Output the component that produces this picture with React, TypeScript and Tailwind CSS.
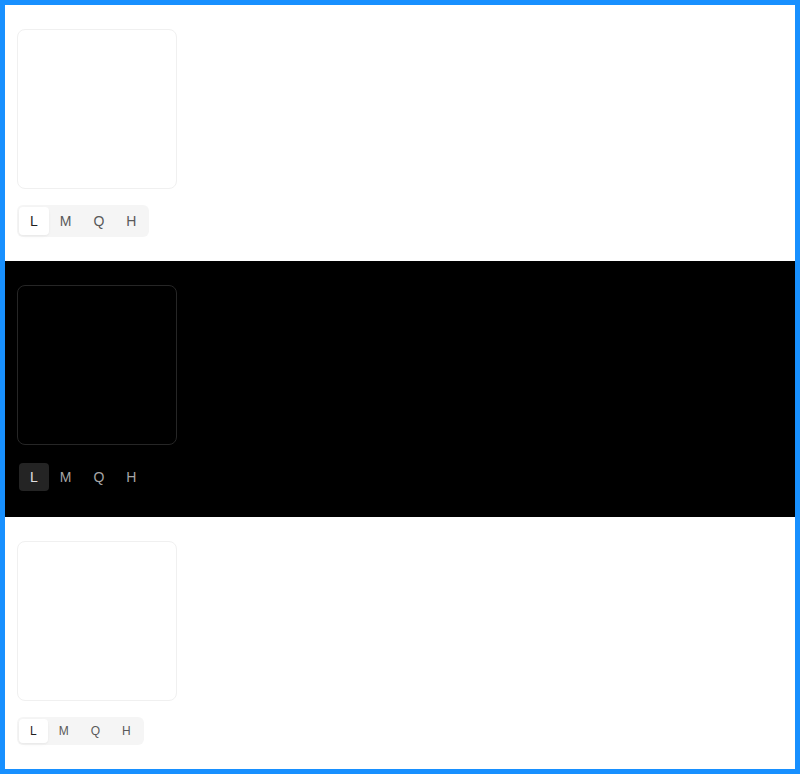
import { useState } from 'react';

const levels = ['L', 'M', 'Q', 'H'];

type Theme = 'light' | 'dark';

function Segmented({ theme, small }: { theme: Theme; small?: boolean }) {
  const [value, setValue] = useState('L');
  const dark = theme === 'dark';

  return (
    <div
      className={`inline-flex self-start p-[2px] rounded-md ${
        dark ? 'bg-black' : 'bg-[#f5f5f5]'
      }`}
    >
      {levels.map((level) => {
        const active = level === value;
        return (
          <button
            key={level}
            onClick={() => setValue(level)}
            className={`px-[11px] rounded ${small ? 'h-6 text-xs' : 'h-7 text-sm'} ${
              active
                ? dark
                  ? 'bg-[#242424] text-[#e0e0e0]'
                  : 'bg-white text-[#1f1f1f] shadow-[0_1px_2px_0_rgba(0,0,0,0.03),0_1px_6px_-1px_rgba(0,0,0,0.02),0_2px_4px_0_rgba(0,0,0,0.02)]'
                : dark
                  ? 'text-[#a6a6a6]'
                  : 'text-[#595959]'
            }`}
          >
            {level}
          </button>
        );
      })}
    </div>
  );
}

function QRBlock({ theme, small }: { theme: Theme; small?: boolean }) {
  const dark = theme === 'dark';
  return (
    <div className={`flex flex-col gap-4 px-3 py-6 ${dark ? 'bg-black' : 'bg-white'}`}>
      {/* QR canvas is empty in the capture, only the frame shows */}
      <div
        className={`w-40 h-40 rounded-lg border ${
          dark ? 'border-[#262626] bg-black' : 'border-[#f0f0f0] bg-white'
        }`}
      />
      <Segmented theme={theme} small={small} />
    </div>
  );
}

export default function App() {
  return (
    <div
      className="min-h-[774px] border-[5px] border-[#1890ff] bg-white"
      style={{ fontFamily: '"Liberation Sans", Arial, sans-serif' }}
    >
      <QRBlock theme="light" />
      <QRBlock theme="dark" />
      <QRBlock theme="light" small />
    </div>
  );
}
